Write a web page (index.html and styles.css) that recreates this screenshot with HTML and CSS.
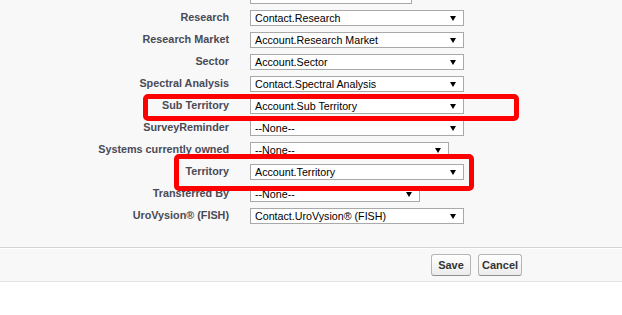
FILE: index.html
```html
<!DOCTYPE html>
<html lang="en">
<head>
    <meta charset="UTF-8">
    <title>Field Mapping</title>
    <link rel="stylesheet" href="styles.css">
</head>
<body>
    <div class="page">
        <div class="edit-block">
            <div class="field-row">
                <span class="field-label"></span>
                <div class="picklist w-short"><span class="picklist-value"></span></div>
            </div>
            <div class="field-row">
                <span class="field-label">Research</span>
                <div class="picklist"><span class="picklist-value">Contact.Research</span><span class="arrow"></span></div>
            </div>
            <div class="field-row">
                <span class="field-label">Research Market</span>
                <div class="picklist"><span class="picklist-value">Account.Research Market</span><span class="arrow"></span></div>
            </div>
            <div class="field-row">
                <span class="field-label">Sector</span>
                <div class="picklist"><span class="picklist-value">Account.Sector</span><span class="arrow"></span></div>
            </div>
            <div class="field-row">
                <span class="field-label">Spectral Analysis</span>
                <div class="picklist"><span class="picklist-value">Contact.Spectral Analysis</span><span class="arrow"></span></div>
            </div>
            <div class="field-row">
                <span class="field-label">Sub Territory</span>
                <div class="picklist"><span class="picklist-value">Account.Sub Territory</span><span class="arrow"></span></div>
            </div>
            <div class="field-row">
                <span class="field-label">SurveyReminder</span>
                <div class="picklist"><span class="picklist-value">--None--</span><span class="arrow"></span></div>
            </div>
            <div class="field-row">
                <span class="field-label">Systems currently owned</span>
                <div class="picklist w-mid"><span class="picklist-value">--None--</span><span class="arrow"></span></div>
            </div>
            <div class="field-row">
                <span class="field-label">Territory</span>
                <div class="picklist"><span class="picklist-value">Account.Territory</span><span class="arrow"></span></div>
            </div>
            <div class="field-row">
                <span class="field-label">Transferred By</span>
                <div class="picklist w-small"><span class="picklist-value">--None--</span><span class="arrow"></span></div>
            </div>
            <div class="field-row">
                <span class="field-label">UroVysion® (FISH)</span>
                <div class="picklist"><span class="picklist-value">Contact.UroVysion® (FISH)</span><span class="arrow"></span></div>
            </div>
        </div>

        <div class="button-bar">
            <button class="btn btn-save">Save</button>
            <button class="btn">Cancel</button>
        </div>

        <!-- highlight marks -->
        <div class="mark mark-sub"></div>
        <div class="mark mark-territory"></div>
    </div>
</body>
</html>
```

FILE: styles.css
```css
body {
    margin: 0;
    background: #fff;
    font-family: "Liberation Sans", Arial, sans-serif;
}

.page {
    position: relative;
    display: flow-root;
    height: 315px;
    overflow: hidden;
}

.edit-block {
    margin-top: -15px;
    padding-bottom: 20px;
    background: #f8f8f8;
    border-bottom: 1px solid #d4d4d4;
}

.field-row {
    display: grid;
    grid-template-columns: 229px auto;
    column-gap: 21px;
    align-items: center;
    height: 22px;
}

.field-label {
    text-align: right;
    font-size: 10.8px;
    font-weight: bold;
    color: #4a4a56;
    margin-top: -2px;
}

.picklist {
    display: flex;
    align-items: center;
    justify-content: space-between;
    box-sizing: border-box;
    width: 214px;
    height: 16px;
    padding: 0 7px 0 4px;
    background: #fff;
    border: 1px solid #a9a9a9;
    font-size: 10.7px;
    color: #000;
}

.picklist.w-short { width: 162px; }
.picklist.w-mid { width: 199px; }
.picklist.w-small { width: 170px; }

.arrow {
    width: 0;
    height: 0;
    border-left: 3px solid transparent;
    border-right: 3px solid transparent;
    border-top: 5px solid #000;
}

.button-bar {
    display: flex;
    gap: 7px;
    padding: 5px 0 5px 431px;
    background: #f8f8f8;
    border-top: 1px solid #fff;
    border-bottom: 1px solid #e3e3e3;
}

.btn {
    box-sizing: border-box;
    height: 22px;
    min-width: 40px;
    padding: 0 3px;
    font-family: "Liberation Sans", Arial, sans-serif;
    font-size: 11px;
    font-weight: bold;
    color: #333;
    background: linear-gradient(#ffffff, #ececec);
    border: 1px solid #b5b5b5;
    border-bottom-color: #8f8f8f;
    border-radius: 3px;
}

.mark {
    position: absolute;
    box-sizing: border-box;
    border: 5px solid #ff0000;
    border-radius: 5px;
}

.mark-sub {
    left: 143px;
    top: 94px;
    width: 376px;
    height: 27px;
}

.mark-territory {
    left: 174px;
    top: 154px;
    width: 300px;
    height: 37px;
}
```
